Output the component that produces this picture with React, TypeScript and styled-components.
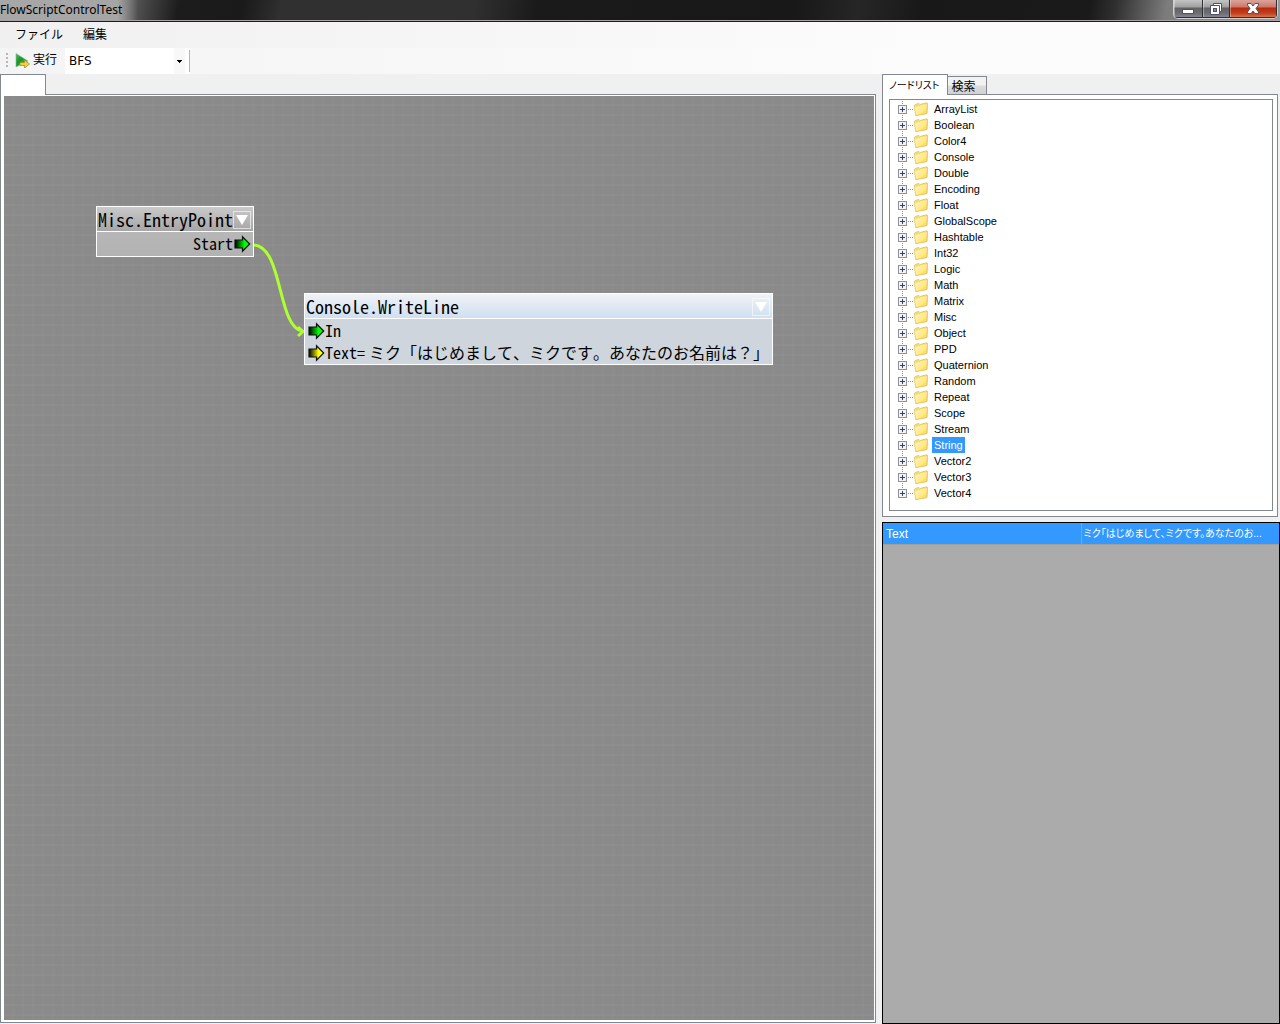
import React, { useState } from "react";
import styled, { createGlobalStyle, css } from "styled-components";

const UI_FONT = `"DejaVu Sans", "Noto Sans CJK JP", sans-serif`;
const TITLE_FONT = `"Noto Sans", sans-serif`;
const LIST_FONT = `"Liberation Sans", "Noto Sans CJK JP", sans-serif`;
const NODE_FONT = `"Noto Sans Mono CJK JP", "Liberation Mono", "Noto Sans CJK JP", monospace`;
const BORDER = "#828790";

const GlobalStyle = createGlobalStyle`
  * { box-sizing: border-box; }
  body { margin: 0; background: #f0f0f0; }
  button, select { font: inherit; color: inherit; margin: 0; padding: 0; border: 0; background: none; }
`;

const Window = styled.div`
  display: flex;
  flex-direction: column;
  height: 100vh;
  font-family: ${UI_FONT};
  font-size: 12px;
  color: #000;
  overflow: hidden;
`;

const TitleBar = styled.header`
  display: flex;
  justify-content: space-between;
  align-items: flex-start;
  flex: none;
  height: 22px;
  border-bottom: 1px solid #1c1c1c;
  box-shadow: inset 0 -1px 0 #a8a4a6;
  background: linear-gradient(
    100deg,
    #6a6a6a 0%,
    #5e5e5e 10%,
    #3c3c3c 12%,
    #1c1c1c 14%,
    #1a1a1a 19%,
    #303030 22%,
    #303030 37%,
    #1a1a1a 42%,
    #181818 62%,
    #262626 67%,
    #181818 72%,
    #1a1a1a 85%,
    #303030 87%,
    #7c7c7c 91%,
    #9a9a9a 100%
  );
`;

const Title = styled.h1`
  margin: 0;
  padding-right: 16px;
  font-family: ${TITLE_FONT};
  font-size: 12px;
  font-weight: 400;
  line-height: 20px;
  background: linear-gradient(90deg, rgba(178, 178, 178, 0.85) 85%, rgba(178, 178, 178, 0));
`;

const WindowButtons = styled.div`
  display: flex;
  height: 19px;
  margin-right: 2px;
  border: 1px solid #d0d0d0;
  border-top: 0;
  border-radius: 0 0 5px 5px;
  overflow: hidden;
`;

const WindowButton = styled.button<{ $width: number; $danger?: boolean }>`
  display: flex;
  justify-content: center;
  align-items: center;
  width: ${(p) => p.$width}px;
  height: 18px;
  border: 1px solid #2e2e34;
  border-top: 0;
  border-left-width: 0;
  box-shadow: inset 1px 0 0 rgba(255, 255, 255, 0.35);
  background: ${(p) =>
    p.$danger
      ? "linear-gradient(#d9a59c 0, #cc7766 7px, #b42c10 8px, #c43c18 13px, #d88060 18px)"
      : "linear-gradient(#c4c4c4 0, #a0a0a0 7px, #626266 8px, #6c6c72 13px, #8c8c9a 18px)"};
`;

const MenuBar = styled.nav`
  display: flex;
  flex: none;
  height: 26px;
  padding-left: 5px;
  background: linear-gradient(90deg, #f0f0f0, #fcfcfc 75%);
`;

const MenuItem = styled.button`
  padding: 0 10px;
  line-height: 24px;
`;

const Toolbar = styled.div`
  display: flex;
  align-items: center;
  flex: none;
  height: 26px;
  padding-left: 6px;
  background: linear-gradient(90deg, #f4f4f4, #fcfcfc 75%);
`;

const Grip = styled.span`
  width: 2px;
  height: 16px;
  margin-right: 7px;
  background: repeating-linear-gradient(#b8b8b8 0 2px, transparent 2px 4px);
`;

const RunButton = styled.button`
  display: flex;
  align-items: center;
  gap: 3px;
  margin-right: 8px;
  padding-bottom: 2px;
  line-height: 22px;
`;

const ComboWrap = styled.div`
  display: flex;
  align-items: center;
  position: relative;
  width: 125px;
  height: 26px;
  background:
    linear-gradient(#b4b4b4, #b4b4b4) right center / 1px 22px no-repeat,
    linear-gradient(90deg, #fff 109px, #f8f8f8 109px 120px, #fff 120px);
`;

const Combo = styled.select`
  appearance: none;
  width: 100%;
  height: 26px;
  padding-left: 4px;
  outline: 0;
`;

const ComboArrow = styled.svg`
  position: absolute;
  right: 8px;
  top: 12px;
  pointer-events: none;
`;

const Workspace = styled.main`
  display: grid;
  grid-template-columns: minmax(0, 876fr) minmax(0, 398fr);
  gap: 6px;
  flex: 1;
  min-height: 0;
`;

const Column = styled.section<{ $foot?: boolean }>`
  display: flex;
  flex-direction: column;
  min-width: 0;
  min-height: 0;
  padding-bottom: ${(p) => (p.$foot ? 1 : 0)}px;
`;

const TabStrip = styled.div`
  display: flex;
  align-items: flex-end;
  flex: none;
  height: 21px;
  margin-bottom: -1px;
  z-index: 1;
`;

const Tab = styled.button<{ $active?: boolean }>`
  height: 18px;
  padding: 0 10px 0 4px;
  border: 1px solid ${BORDER};
  border-left-width: 0;
  margin-bottom: 1px;
  font-family: "Noto Sans CJK JP", sans-serif;
  line-height: 17px;
  background: linear-gradient(#f2f2f2 0 45%, #dcdcdc 55%, #d2d2d2);
  border-bottom: 0;
  ${(p) =>
    p.$active &&
    css`
      min-width: 46px;
      height: 21px;
      margin-bottom: 0;
      padding: 0 7px 0 6px;
      border-left-width: 1px;
      font-size: 10px;
      font-feature-settings: "palt";
      line-height: 18px;
      background: #fff;
    `}
`;

const TabPage = styled.div<{ $pad: string }>`
  display: flex;
  flex: 1;
  min-height: 0;
  padding: ${(p) => p.$pad};
  border: 1px solid ${BORDER};
  background: #fff;
`;

const Canvas = styled.div`
  position: relative;
  flex: 1;
  overflow: hidden;
  background-color: #8a8a8a;
  background-image:
    repeating-linear-gradient(transparent 0 8px, rgba(255, 255, 255, 0.03) 8px 10px),
    repeating-linear-gradient(90deg, transparent 0 8px, rgba(255, 255, 255, 0.02) 8px 10px);
`;

const Wire = styled.svg`
  position: absolute;
  left: 249px;
  top: 140px;
`;

const NodeBox = styled.article<{ $x: number; $y: number; $selected?: boolean }>`
  position: absolute;
  left: ${(p) => p.$x}px;
  top: ${(p) => p.$y}px;
  border: 1px solid #fff;
  font-family: ${NODE_FONT};
  white-space: nowrap;
  background: ${(p) => (p.$selected ? "#ced5dd" : "linear-gradient(#bcbcbc, #b2b2b2)")};
`;

const NodeHeader = styled.div<{ $selected?: boolean }>`
  display: flex;
  justify-content: space-between;
  align-items: center;
  height: 25px;
  padding: 2px 2px 0 1px;
  border-bottom: 1px solid #fff;
  background: ${(p) =>
    p.$selected ? "linear-gradient(#f0f2f5, #cfe0f1)" : "linear-gradient(#cacaca, #a6a6a6)"};
`;

const NodeName = styled.h2`
  align-self: flex-start;
  margin: 0;
  font-size: 18px;
  font-weight: 400;
  line-height: 20px;
`;

const NodeToggle = styled.button`
  display: flex;
  align-items: center;
  justify-content: center;
  width: 18px;
  height: 18px;
  border: 1px solid rgba(255, 255, 255, 0.6);
`;

const Ports = styled.div`
  min-height: 24px;
  padding: 0 2px 1px;
`;

const Port = styled.div<{ $out?: boolean }>`
  display: flex;
  align-items: center;
  justify-content: ${(p) => (p.$out ? "flex-end" : "flex-start")};
  height: 22px;
  font-size: 16px;
  line-height: 22px;
`;

const PortValue = styled.span`
  padding: 0 1px 0 4px;
`;

const TreeFrame = styled.div`
  flex: 1;
  padding: 1px 0 8px 8px;
  border: 1px solid ${BORDER};
  overflow: hidden;
`;

const Tree = styled.ul`
  margin: 0;
  padding: 0;
  list-style: none;
  font-family: ${LIST_FONT};
  font-size: 11px;
`;

const TreeItem = styled.li`
  display: flex;
  align-items: center;
  height: 16px;
  background: repeating-linear-gradient(#909090 0 1px, transparent 1px 2px) 4px 0 / 1px 100% no-repeat;

  &:last-child {
    background-size: 1px 50%;
  }
`;

const Expander = styled.button`
  display: flex;
  flex: none;
  width: 9px;
  height: 9px;
`;

const Dots = styled.span`
  flex: none;
  width: 6px;
  height: 1px;
  background: repeating-linear-gradient(90deg, transparent 0 1px, #909090 1px 2px);
`;

const TreeLabel = styled.button<{ $selected?: boolean }>`
  margin-left: 3px;
  padding: 0 2px;
  line-height: 16px;
  color: ${(p) => (p.$selected ? "#fff" : "#000")};
  background: ${(p) => (p.$selected ? "#3399ff" : "transparent")};
`;

const NodeListPane = styled.div`
  display: flex;
  flex-direction: column;
  flex: 444 1 0;
  min-height: 0;
  padding-right: 2px;
`;

const PropertyPane = styled.div`
  flex: 501 1 0;
  min-height: 0;
  margin-top: 5px;
  border: 1px solid #000;
  background: #ababab;
`;

const PropertyTable = styled.table`
  width: 100%;
  table-layout: fixed;
  border-collapse: collapse;
  font-family: ${LIST_FONT};
  font-size: 12px;
  color: #fff;
  background: #3399ff;
`;

const cell = css`
  height: 21px;
  padding: 1px 3px 0;
  font-weight: 400;
  text-align: left;
  line-height: 20px;
  white-space: nowrap;
  border-bottom: 1px solid #a0a0a0;
`;

const PropertyName = styled.th`
  ${cell}
  border-right: 1px solid #a0a0a0;
`;

const PropertyValue = styled.td`
  ${cell}
  padding: 1px 0 0 2px;
  font-size: 10px;
  font-feature-settings: "palt";
`;

const RunIcon = () => (
  <svg width="15" height="15" viewBox="0 0 15 15" aria-hidden="true">
    <defs>
      <linearGradient id="run" x1="0" y1="0" x2="1" y2="1">
        <stop offset="0" stopColor="#5cb868" />
        <stop offset="0.4" stopColor="#14962a" />
        <stop offset="1" stopColor="#3ed04c" />
      </linearGradient>
    </defs>
    <path d="M1 0.500 L13 8 L1 14 Z" fill="url(#run)" stroke="#7fbf8c" strokeWidth="0.6" />
    <path d="M5 9.500h4.500v-2.500l5 4-5 4v-2.500h-4.500z" fill="#f2d23c" stroke="#a98a2c" strokeWidth="0.8" />
  </svg>
);

const PortArrow = ({ color }: { color: string }) => (
  <svg width="18" height="16" viewBox="-1 -1 18 16" overflow="visible" aria-hidden="true">
    <defs>
      <linearGradient id={`port-${color.slice(1)}`}>
        <stop offset="0" stopColor="#000" />
        <stop offset="0.65" stopColor={color} />
      </linearGradient>
    </defs>
    <path
      d="M1 4h7.500v-3.200l7.200 7.200-7.200 7.200v-3.200h-7.500z"
      fill={`url(#port-${color.slice(1)})`}
      stroke="#111"
      strokeWidth="1.200"
    />
  </svg>
);

const Folder = () => (
  <svg width="16" height="16" viewBox="0 0 16 16" aria-hidden="true">
    <defs>
      <linearGradient id="folder" x1="0" y1="0" x2="1" y2="1">
        <stop offset="0" stopColor="#fff8c4" />
        <stop offset="0.600" stopColor="#ffea88" />
        <stop offset="1" stopColor="#f6d04c" />
      </linearGradient>
    </defs>
    <path d="M1.500 5 L2 3.500 6 2.500 7 3.500 14 1.800 14.500 3 14 12.500 3 14.500z" fill="#fbe58c" stroke="#dfbd5c" strokeWidth="0.8" />
    <path d="M1.500 5.500 7 4.500 8 3.500 14.500 2.500 13.500 12.500 2.500 14.500z" fill="url(#folder)" stroke="#e6c254" strokeWidth="0.6" />
  </svg>
);

const Plus = () => (
  <svg width="9" height="9" shapeRendering="crispEdges" aria-hidden="true">
    <rect x="0.5" y="0.5" width="8" height="8" fill="#f4f4f4" stroke="#919191" />
    <path d="M2 4.500h5M4.500 2v5" stroke="#27408b" />
  </svg>
);

const Toggle = ({ name }: { name: string }) => (
  <NodeToggle aria-label={`${name} menu`}>
    <svg width="12" height="10" aria-hidden="true">
      <path d="M0 0h12l-6 10z" fill="#fff" />
    </svg>
  </NodeToggle>
);

const folders = [
  "ArrayList", "Boolean", "Color4", "Console", "Double", "Encoding", "Float", "GlobalScope",
  "Hashtable", "Int32", "Logic", "Math", "Matrix", "Misc", "Object", "PPD", "Quaternion",
  "Random", "Repeat", "Scope", "Stream", "String", "Vector2", "Vector3", "Vector4",
];

const message = "ミク「はじめまして、ミクです。あなたのお名前は？」";
const preview = `${message.slice(0, 20)}...`;

export default function App() {
  const [selected, setSelected] = useState("String");

  return (
    <Window>
      <GlobalStyle />
      <TitleBar>
        <Title>FlowScriptControlTest</Title>
        <WindowButtons>
          <WindowButton aria-label="Minimize" $width={29}>
            <svg width="12" height="12">
              <rect x="0.5" y="6.500" width="11" height="4" fill="#fff" stroke="#50506a" />
            </svg>
          </WindowButton>
          <WindowButton aria-label="Restore" $width={27}>
            <svg width="12" height="12">
              <path d="M3.500 0.500h8v8h-2v3h-9v-9h3z" fill="#fff" stroke="#50506a" />
              <path d="M3 2.500h6.500v6" fill="none" stroke="#50506a" />
              <rect x="3.500" y="5.500" width="3" height="3" fill="#8a8a92" stroke="#50506a" />
            </svg>
          </WindowButton>
          <WindowButton aria-label="Close" $width={47} $danger>
            <svg width="12" height="11">
              <path
                d="M0.500 0.500h3.500l2 2.500 2-2.500h3.500v1.500l-2.500 3.500 2.500 3.500v1.500h-3.500l-2-2.500-2 2.500h-3.500v-1.500l2.500-3.500-2.500-3.500z"
                fill="#fff"
                stroke="#50506a"
              />
            </svg>
          </WindowButton>
        </WindowButtons>
      </TitleBar>

      <MenuBar>
        <MenuItem>ファイル</MenuItem>
        <MenuItem>編集</MenuItem>
      </MenuBar>

      <Toolbar>
        <Grip />
        <RunButton>
          <RunIcon />
          実行
        </RunButton>
        <ComboWrap>
          <Combo aria-label="Search order" defaultValue="BFS">
            <option>BFS</option>
          </Combo>
          <ComboArrow width="5" height="3" shapeRendering="crispEdges">
            <path d="M0 0h5l-2.500 3z" />
          </ComboArrow>
        </ComboWrap>
      </Toolbar>

      <Workspace>
        <Column $foot>
          <TabStrip>
            <Tab $active aria-label="Script" />
          </TabStrip>
          <TabPage $pad="1px 1px 2px 3px">
            <Canvas>
              <Wire width="54" height="110">
                <path
                  d="M1 9C30 11 24 90 49 95"
                  fill="none"
                  stroke="#adff2f"
                  strokeWidth="3"
                />
                <path d="M45 91l5 4.500-5 4.500" fill="none" stroke="#adff2f" strokeWidth="3" />
              </Wire>
              <NodeBox $x={92} $y={110}>
                <NodeHeader>
                  <NodeName>Misc.EntryPoint</NodeName>
                  <Toggle name="Misc.EntryPoint" />
                </NodeHeader>
                <Ports>
                  <Port $out>
                    Start
                    <PortArrow color="#00ff00" />
                  </Port>
                </Ports>
              </NodeBox>
              <NodeBox $x={300} $y={197} $selected>
                <NodeHeader $selected>
                  <NodeName>Console.WriteLine</NodeName>
                  <Toggle name="Console.WriteLine" />
                </NodeHeader>
                <Ports>
                  <Port>
                    <PortArrow color="#00ff00" />
                    In
                  </Port>
                  <Port>
                    <PortArrow color="#ffff00" />
                    Text=<PortValue>{message}</PortValue>
                  </Port>
                </Ports>
              </NodeBox>
            </Canvas>
          </TabPage>
        </Column>

        <Column>
          <NodeListPane>
            <TabStrip>
              <Tab $active>ノードリスト</Tab>
              <Tab>検索</Tab>
            </TabStrip>
            <TabPage $pad="4px 4px 5px 6px">
              <TreeFrame>
                <Tree>
                  {folders.map((name) => (
                    <TreeItem key={name}>
                      <Expander aria-label={`Expand ${name}`}>
                        <Plus />
                      </Expander>
                      <Dots />
                      <Folder />
                      <TreeLabel $selected={name === selected} onClick={() => setSelected(name)}>
                        {name}
                      </TreeLabel>
                    </TreeItem>
                  ))}
                </Tree>
              </TreeFrame>
            </TabPage>
          </NodeListPane>
          <PropertyPane>
            <PropertyTable>
              <tbody>
                <tr>
                  <PropertyName scope="row">Text</PropertyName>
                  <PropertyValue>{preview}</PropertyValue>
                </tr>
              </tbody>
            </PropertyTable>
          </PropertyPane>
        </Column>
      </Workspace>
    </Window>
  );
}
